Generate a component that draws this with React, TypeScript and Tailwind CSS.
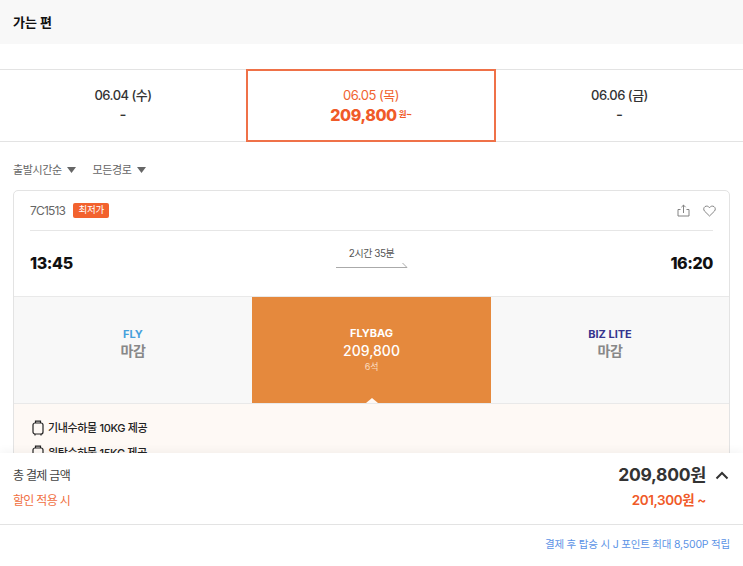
import React from "react";

const font = { fontFamily: '"Inter","Noto Sans CJK KR","Noto Sans",sans-serif' };

function Bag({ className }: { className?: string }) {
  return (
    <svg width="14" height="16" viewBox="0 0 14 16" fill="none" stroke="#222" strokeWidth="1.2" className={className}>
      <rect x="2" y="3" width="10" height="11" rx="2" />
      <path d="M4.500 3V1.200h5V3" />
      <path d="M4 14v1.400M10 14v1.400" />
    </svg>
  );
}

function DateTab({ date, price, width }: { date: string; price: string; width: string }) {
  return (
    <div className={`${width} flex flex-col items-center justify-center pb-[2px]`}>
      <div className="text-[13px] leading-[20px] font-medium text-[#333] tracking-[-0.5px]">{date}</div>
      <div className="text-[15px] leading-[18px] font-medium text-[#333] mt-[1px] pb-[1px]">{price}</div>
    </div>
  );
}

function Caret() {
  return (
    <svg width="9" height="6" viewBox="0 0 9 6" className="ml-[5px]">
      <path d="M0 0h9L4.500 6z" fill="#666" />
    </svg>
  );
}

function ClosedFare({ name, color }: { name: string; color: string }) {
  return (
    <div className="flex-1 flex flex-col items-center pt-[30px]">
      <div className="text-[11px] leading-[14px] font-bold" style={{ color }}>{name}</div>
      <div className="text-[14px] leading-[20px] font-semibold text-[#888] tracking-[-0.3px]">마감</div>
    </div>
  );
}

export default function App() {
  return (
    <div style={font} className="relative w-[743px] h-[566px] overflow-hidden bg-white">
      <div className="h-[44px] bg-[#f8f8f8] pl-[13px] pt-[13px] text-[13px] leading-[18px] font-bold text-[#111]">가는 편</div>

      <div className="mt-[25px] h-[73px] flex border-y border-[#e3e3e3]">
        <DateTab width="w-[246px]" date="06.04 (수)" price="-" />
        <div className="w-[250px] -my-px border-2 border-[#ef7148] flex flex-col items-center justify-center pb-[2px]">
          <div className="text-[13px] leading-[20px] text-[#f0632f] tracking-[-0.5px]">06.05 (목)</div>
          <div className="flex items-center h-[18px] mt-[1px] pb-[1px]">
            <span className="text-[16px] font-extrabold text-[#f05a28] tracking-[-0.4px]">209,800</span>
            <span className="text-[8.500px] font-bold text-[#f05a28] ml-[2px] tracking-[-0.3px]">원~</span>
          </div>
        </div>
        <DateTab width="w-[247px]" date="06.06 (금)" price="-" />
      </div>

      <div className="flex items-center h-[18px] mt-[19px] pl-[13px] text-[11px] text-[#666] tracking-[-0.4px]">
        <span className="flex items-center">출발시간순<Caret /></span>
        <span className="flex items-center ml-[17px]">모든경로<Caret /></span>
      </div>

      <div className="mx-[13px] mt-[11px] border border-[#e3e3e3] rounded-[5px] overflow-hidden">
        <div className="mx-[16px] h-[40px] flex items-center border-b border-[#e6e6e6]">
          <span className="text-[12px] text-[#666] tracking-[-0.8px]">7C1513</span>
          <span className="ml-[8px] h-[15px] w-[36px] bg-[#f2622e] rounded-[2px] text-white text-[9.500px] tracking-[-0.2px] flex items-center justify-center">최저가</span>
          <span className="ml-auto -mr-[3px] flex items-center gap-[13px]">
            <svg width="13" height="13" viewBox="0 0 13 13" fill="none" stroke="#777" strokeWidth="0.9">
              <path d="M6.500 9V1.200M4.400 3.200l2.100-2.100 2.100 2.100" />
              <path d="M3.500 5.500H1v6.500h11V5.500H9.500" />
            </svg>
            <svg width="13" height="12" viewBox="0 0 13 12" fill="none" stroke="#777" strokeWidth="0.9">
              <path d="M6.500 11L1.600 6.200C.2 4.700.6 2.600 2 1.600c1.500-1 3.400-.5 4.500 1.100C7.600 1.100 9.500.6 11 1.600c1.400 1 1.800 3.100.4 4.600z" />
            </svg>
          </span>
        </div>

        <div className="mx-[16px] h-[65px] flex items-center justify-between">
          <span className="text-[16px] font-extrabold text-[#111] tracking-[-0.4px] -mt-[1px]">13:45</span>
          <div className="flex flex-col items-center -mt-[13px]">
            <span className="text-[10px] leading-[14px] text-[#555] tracking-[-0.45px]">2시간 35분</span>
            <svg width="72" height="6" viewBox="0 0 72 6" fill="none" stroke="#aaa" strokeWidth="1" className="mt-[2px]">
              <path d="M0 5.500h71L66.500 1" />
            </svg>
          </div>
          <span className="text-[16px] font-extrabold text-[#111] tracking-[-0.4px] -mt-[1px]">16:20</span>
        </div>

        <div className="relative h-[108px] flex bg-[#f8f8f8] border-y border-[#e9e9e9]">
          <ClosedFare name="FLY" color="#46a0dc" />
          <div className="relative w-[239px] bg-[#e5893d] flex flex-col items-center pt-[29px] text-white">
            <div className="text-[11px] leading-[14px] font-bold">FLYBAG</div>
            <div className="text-[14px] leading-[20px] font-medium mt-[1px]">209,800</div>
            <div className="text-[9px] leading-[13px] text-[#fbdcc0] tracking-[-0.2px] -mt-[1px]">6석</div>
            <div className="absolute bottom-0 left-1/2 -ml-[6px] w-0 h-0 border-x-[6px] border-x-transparent border-b-[5px] border-b-[#fff9f5]" />
          </div>
          <ClosedFare name="BIZ LITE" color="#35348f" />
        </div>

        <div className="bg-[#fef9f5] px-[17px] pt-[15px] h-[120px] text-[11px] font-medium text-[#222] tracking-[-0.35px]">
          <div className="flex items-center h-[18px]">
            <Bag />
            <span className="ml-[3px]">기내수하물 10KG 제공</span>
          </div>
          <div className="flex items-center h-[18px] mt-[7px]">
            <Bag />
            <span className="ml-[3px]">위탁수하물 15KG 제공</span>
          </div>
        </div>
      </div>

      <div className="absolute left-0 right-0 bottom-0 h-[113px] bg-white shadow-[0_-3px_8px_rgba(0,0,0,0.04)]">
        <div className="flex justify-between items-center pl-[13px] pr-[14px] pt-[10px] h-[35px]">
          <span className="text-[12px] text-[#444] tracking-[-0.7px]">총 결제 금액</span>
          <span className="flex items-center">
            <span className="text-[17.500px] font-bold text-[#333] tracking-[-0.3px]">209,800원</span>
            <svg width="14" height="9" viewBox="0 0 14 9" fill="none" stroke="#333" strokeWidth="2" className="ml-[9px]">
              <path d="M1.500 7.500L7 2l5.500 5.500" />
            </svg>
          </span>
        </div>
        <div className="flex justify-between items-center pl-[13px] pr-[37px] h-[24px] mt-[1px]">
          <span className="text-[12px] text-[#f0703f] tracking-[-0.7px]">할인 적용 시</span>
          <span className="text-[13.500px] font-semibold text-[#f05a28] tracking-[-0.4px] -mt-[1px]">201,300원 ~</span>
        </div>
        <div className="mt-[11px] border-t border-[#e3e3e3] h-[41px] flex items-center justify-end pr-[13px] text-[10.500px] text-[#5b93e6] tracking-[-0.2px]">
          결제 후 탑승 시 J 포인트 최대 8,500P 적립
        </div>
      </div>
    </div>
  );
}
